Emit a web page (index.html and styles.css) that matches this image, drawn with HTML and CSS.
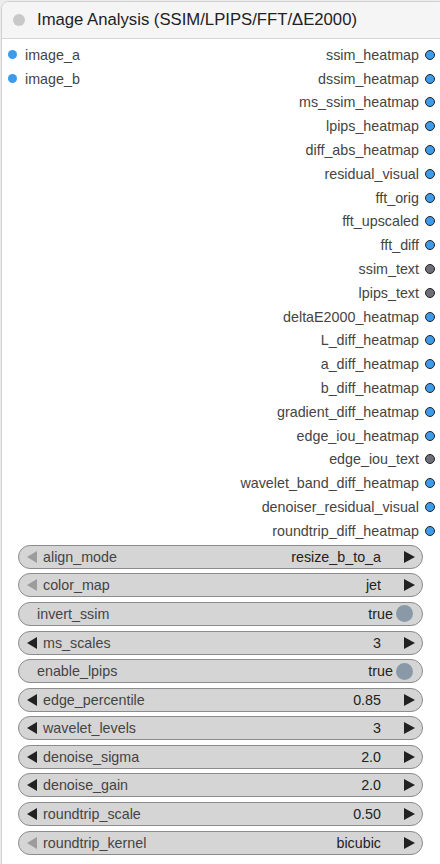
FILE: index.html
```html
<!DOCTYPE html>
<html>
<head>
<meta charset="utf-8">
<link rel="stylesheet" href="styles.css">
</head>
<body>
<div class="node">
  <div class="header">
    <span class="hdot"></span>
    <span class="title">Image Analysis (SSIM/LPIPS/FFT/ΔE2000)</span>
  </div>
  <div class="body">
    <div class="slots">
      <div class="inputs">
        <div class="slot in"><span class="dot blue"></span><span>image_a</span></div>
        <div class="slot in"><span class="dot blue"></span><span>image_b</span></div>
      </div>
      <div class="outputs">
        <div class="slot out"><span>ssim_heatmap</span><span class="odot blue"></span></div>
        <div class="slot out"><span>dssim_heatmap</span><span class="odot blue"></span></div>
        <div class="slot out"><span>ms_ssim_heatmap</span><span class="odot blue"></span></div>
        <div class="slot out"><span>lpips_heatmap</span><span class="odot blue"></span></div>
        <div class="slot out"><span>diff_abs_heatmap</span><span class="odot blue"></span></div>
        <div class="slot out"><span>residual_visual</span><span class="odot blue"></span></div>
        <div class="slot out"><span>fft_orig</span><span class="odot blue"></span></div>
        <div class="slot out"><span>fft_upscaled</span><span class="odot blue"></span></div>
        <div class="slot out"><span>fft_diff</span><span class="odot blue"></span></div>
        <div class="slot out"><span>ssim_text</span><span class="odot gray"></span></div>
        <div class="slot out"><span>lpips_text</span><span class="odot gray"></span></div>
        <div class="slot out"><span>deltaE2000_heatmap</span><span class="odot blue"></span></div>
        <div class="slot out"><span>L_diff_heatmap</span><span class="odot blue"></span></div>
        <div class="slot out"><span>a_diff_heatmap</span><span class="odot blue"></span></div>
        <div class="slot out"><span>b_diff_heatmap</span><span class="odot blue"></span></div>
        <div class="slot out"><span>gradient_diff_heatmap</span><span class="odot blue"></span></div>
        <div class="slot out"><span>edge_iou_heatmap</span><span class="odot blue"></span></div>
        <div class="slot out"><span>edge_iou_text</span><span class="odot gray"></span></div>
        <div class="slot out"><span>wavelet_band_diff_heatmap</span><span class="odot blue"></span></div>
        <div class="slot out"><span>denoiser_residual_visual</span><span class="odot blue"></span></div>
        <div class="slot out"><span>roundtrip_diff_heatmap</span><span class="odot blue"></span></div>
      </div>
    </div>
    <div class="widgets">
      <div class="widget"><svg class="arr l dim" viewBox="0 0 10 12"><polygon points="10,0 10,12 0,6"/></svg><span class="label">align_mode</span><span class="value">resize_b_to_a</span><svg class="arr r" viewBox="0 0 11 12"><polygon points="0,0 0,12 11,6"/></svg></div>
      <div class="widget"><svg class="arr l dim" viewBox="0 0 10 12"><polygon points="10,0 10,12 0,6"/></svg><span class="label">color_map</span><span class="value">jet</span><svg class="arr r" viewBox="0 0 11 12"><polygon points="0,0 0,12 11,6"/></svg></div>
      <div class="widget toggle"><span class="label">invert_ssim</span><span class="value">true</span><span class="knob"></span></div>
      <div class="widget"><svg class="arr l" viewBox="0 0 10 12"><polygon points="10,0 10,12 0,6"/></svg><span class="label">ms_scales</span><span class="value">3</span><svg class="arr r" viewBox="0 0 11 12"><polygon points="0,0 0,12 11,6"/></svg></div>
      <div class="widget toggle"><span class="label">enable_lpips</span><span class="value">true</span><span class="knob"></span></div>
      <div class="widget"><svg class="arr l" viewBox="0 0 10 12"><polygon points="10,0 10,12 0,6"/></svg><span class="label">edge_percentile</span><span class="value">0.85</span><svg class="arr r" viewBox="0 0 11 12"><polygon points="0,0 0,12 11,6"/></svg></div>
      <div class="widget"><svg class="arr l" viewBox="0 0 10 12"><polygon points="10,0 10,12 0,6"/></svg><span class="label">wavelet_levels</span><span class="value">3</span><svg class="arr r" viewBox="0 0 11 12"><polygon points="0,0 0,12 11,6"/></svg></div>
      <div class="widget"><svg class="arr l" viewBox="0 0 10 12"><polygon points="10,0 10,12 0,6"/></svg><span class="label">denoise_sigma</span><span class="value">2.0</span><svg class="arr r" viewBox="0 0 11 12"><polygon points="0,0 0,12 11,6"/></svg></div>
      <div class="widget"><svg class="arr l" viewBox="0 0 10 12"><polygon points="10,0 10,12 0,6"/></svg><span class="label">denoise_gain</span><span class="value">2.0</span><svg class="arr r" viewBox="0 0 11 12"><polygon points="0,0 0,12 11,6"/></svg></div>
      <div class="widget"><svg class="arr l" viewBox="0 0 10 12"><polygon points="10,0 10,12 0,6"/></svg><span class="label">roundtrip_scale</span><span class="value">0.50</span><svg class="arr r" viewBox="0 0 11 12"><polygon points="0,0 0,12 11,6"/></svg></div>
      <div class="widget"><svg class="arr l dim" viewBox="0 0 10 12"><polygon points="10,0 10,12 0,6"/></svg><span class="label">roundtrip_kernel</span><span class="value">bicubic</span><svg class="arr r" viewBox="0 0 11 12"><polygon points="0,0 0,12 11,6"/></svg></div>
    </div>
  </div>
</div>
</body>
</html>
```
FILE: styles.css
```css
html, body {
  margin: 0;
  padding: 0;
  background: #ececec;
  font-family: Arial, "Liberation Sans", sans-serif;
}
body {
  width: 440px;
  height: 864px;
  overflow: hidden;
  padding: 1px 0 0 1px;
  box-sizing: border-box;
}
.node {
  width: 446px;
  background: #ffffff;
  border: 1px solid #d0d0d0;
  border-radius: 8px 8px 0 0;
  height: 900px;
  box-sizing: border-box;
}
.header {
  height: 36px;
  background: #f5f5f5;
  border-bottom: 1px solid #d6d6d6;
  border-radius: 8px 8px 0 0;
  display: flex;
  align-items: center;
}
.hdot {
  width: 12px;
  height: 12px;
  border-radius: 50%;
  background: #c8c8c8;
  margin-left: 11px;
  margin-right: 12px;
}
.title {
  font-size: 16.7px;
  color: #222;
}
.body {
  padding-top: 4px;
}
.slots {
  display: flex;
  justify-content: space-between;
}
.slot {
  height: 23.8px;
  display: flex;
  align-items: center;
  font-size: 14.3px;
  color: #444;
}
.in .dot {
  width: 9px;
  height: 9px;
  border-radius: 50%;
  margin: 0 8px 0 6px;
}
.blue { background: #3d9be9; }
.gray { background: #6e6e78; }
.outputs {
  width: 300px;
  display: flex;
  flex-direction: column;
  align-items: flex-end;
  padding-right: 11px;
}
.odot {
  width: 8px;
  height: 8px;
  border-radius: 50%;
  border: 1.2px solid #222;
  margin-left: 6px;
}
.widgets {
  display: flex;
  flex-direction: column;
  gap: 4.6px;
  padding: 2px 0 0 16px;
}
.widget {
  width: 405px;
  height: 24px;
  box-sizing: border-box;
  background: #d5d5d5;
  border: 1px solid #8c8c8c;
  border-radius: 12px;
  display: flex;
  align-items: center;
  font-size: 14.3px;
  color: #444;
  padding: 0 7px 0 8px;
}
.arr {
  height: 12px;
  fill: #222;
  flex: none;
}
.arr.l { width: 10px; margin-right: 6px; }
.arr.r { width: 11px; }
.arr.dim { fill: #9c9c9c; }
.label { flex: 1; }
.value {
  color: #222;
  margin-right: 23px;
}
.toggle { padding-left: 18px; padding-right: 9px; }
.toggle .value { margin-right: 3px; }
.knob {
  width: 17px;
  height: 17px;
  border-radius: 50%;
  background: #8a99a8;
}
```
